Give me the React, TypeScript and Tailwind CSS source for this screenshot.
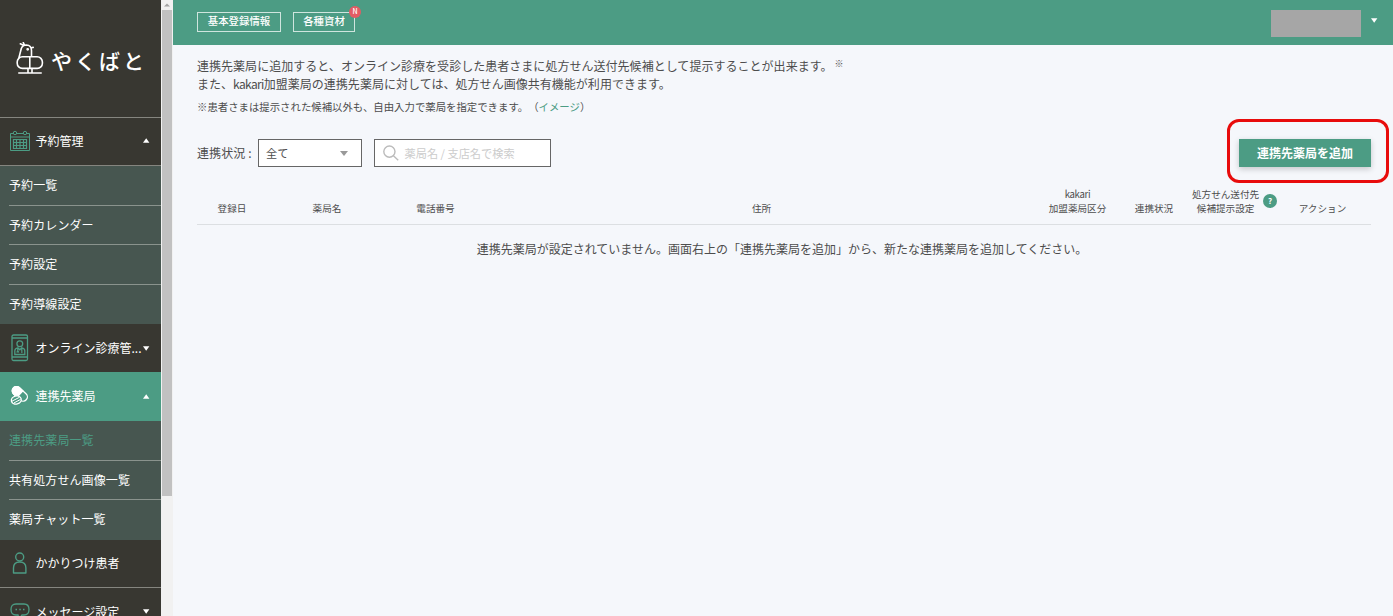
import React from "react";
import clsx from "clsx";

const CalendarIcon = () => (
  <svg width="20" height="22" viewBox="0 0 20 22" fill="none" stroke="#4c9c84">
    <path d="M3 3.5H.5v17h19v-17H17M7 3.5h6M.5 7h19" />
    <circle cx="5" cy="3" r="1.7" />
    <circle cx="15" cy="3" r="1.7" />
    <path d="M3.5 9.5h13v9h-13zM3.5 12.5h13M3.5 15.5h13M6.5 9.5v9M10 9.5v9M13.5 9.5v9" strokeWidth="1.2" />
  </svg>
);

const OnlineIcon = () => (
  <svg width="20" height="28" viewBox="0 0 20 28" fill="none" stroke="#4c9c84" strokeWidth="1.3">
    <rect x="2" y="1" width="15.5" height="25.5" rx="1.5" />
    <path d="M2 4h15.5M2 23h15.5" />
    <circle cx="9.8" cy="9.7" r="2.9" />
    <path d="M4.8 20.5v-3.7q0-2.5 3-3l2 2 2-2q3 .5 3 3v3.7zM7.8 14v3M11.8 14v3M6.8 18.5q1-2 2 0M11 18h1.6" />
  </svg>
);

const PillIcon = () => (
  <svg width="20" height="20" viewBox="0 0 20 20" fill="none" stroke="#fff" strokeWidth="1.3">
    <g transform="rotate(43 10 8)">
      <rect x="1" y="3.7" width="17.5" height="8.6" rx="4.3" />
      <path d="M10 3.7H5.3a4.3 4.3 0 0 0 0 8.6H10z" fill="#fff" />
    </g>
    <ellipse cx="6.3" cy="14" rx="5" ry="4.1" fill="#4c9c84" transform="rotate(-15 6.3 14)" />
    <path d="M2 15.2l7.6-4M3.8 17l6.8-3.6" strokeWidth="1" />
  </svg>
);

const PersonIcon = () => (
  <svg width="18" height="22" viewBox="0 0 18 22" fill="none" stroke="#4c9c84" strokeWidth="1.4">
    <circle cx="9.7" cy="5" r="4" />
    <path d="M3.5 21v-5q0-6 6.2-6t6.2 6v5z" strokeLinejoin="round" />
  </svg>
);

const MessageIcon = () => (
  <svg width="20" height="18" viewBox="0 0 20 18" fill="none" stroke="#4c9c84" strokeWidth="1.3">
    <path d="M6 1h8q5 0 5 5.5t-5 5.5h-2l-3 4-1-4H6Q1 12 1 6.5T6 1z" />
    <path d="M5.5 6.5H7M9.3 6.5h1.5M13 6.5h1.5" />
  </svg>
);

const BirdLogo = () => (
  <svg width="28" height="34" viewBox="0 0 28 34" fill="none" stroke="#fff" strokeWidth="1.6" strokeLinecap="round" strokeLinejoin="round">
    <path d="M3 15.5L5.3 6.5Q6.6 3 10.3 3q5.2.2 5.2 5.5v5.5" />
    <path d="M7.3 3.3L4.3 1.8M8.5 3L7.3.6M15.4 5.8l1.8-.4" />
    <circle cx="11.7" cy="7.3" r=".6" fill="#fff" />
    <rect x="1.2" y="14.8" width="25.2" height="11.6" rx="5.2" />
    <path d="M13.8 15v11.2M12 26.5v4M16 26.5v4M2.8 31h22.4" />
  </svg>
);

const SearchIcon = () => (
  <svg width="16" height="16" viewBox="0 0 16 16" fill="none" stroke="#bbb" strokeWidth="1.4">
    <circle cx="6.4" cy="6.6" r="5.6" />
    <path d="M10.4 10.8l4.8 4.4" />
  </svg>
);

const Triangle = ({ up }: { up?: boolean }) => (
  <svg width="7" height="5" viewBox="0 0 7 5" fill="#fff">
    <path d={up ? "M0 4.7h6.4L3.2.3z" : "M0 .3h6.4L3.2 4.7z"} />
  </svg>
);

interface MenuItemProps {
  icon: React.ReactNode;
  label: string;
  arrow?: "up" | "down";
  className: string;
}

const MenuItem = ({ icon, label, arrow, className }: MenuItemProps) => (
  <div className={clsx("flex shrink-0 items-center pl-2.5 pr-[11px]", className)}>
    <span className="flex w-[25.5px] shrink-0 items-center">{icon}</span>
    <span className="w-0 grow whitespace-nowrap">{label}</span>
    {arrow && <Triangle up={arrow === "up"} />}
  </div>
);

interface SubMenuProps {
  items: string[];
  active?: string;
}

const SubMenu = ({ items, active }: SubMenuProps) => (
  <ul className="shrink-0 bg-[#475650] pl-[9px]">
    {items.map((item) => (
      <li
        key={item}
        className={clsx(
          "flex h-[39.6px] items-center border-b border-[#8a938d] tracking-[0.1px] last:border-transparent",
          item === active && "text-[#4c9c84]",
        )}
      >
        {item}
      </li>
    ))}
  </ul>
);

const Sidebar = () => (
  <aside className="flex w-[161px] shrink-0 flex-col overflow-hidden bg-[#383731] text-xs text-white">
    <div className="flex h-[118px] shrink-0 items-center border-b border-[#85857f] pl-4">
      <BirdLogo />
      <span className="ml-[7px] pt-0.5 text-[21px] font-medium tracking-[3px] whitespace-nowrap">やくばと</span>
    </div>
    <MenuItem icon={<CalendarIcon />} label="予約管理" arrow="up" className="h-12 border-b border-[#85857f] pb-0.5" />
    <SubMenu items={["予約一覧", "予約カレンダー", "予約設定", "予約導線設定"]} />
    <MenuItem icon={<OnlineIcon />} label="オンライン診療管..." arrow="down" className="h-[47.6px]" />
    <MenuItem icon={<PillIcon />} label="連携先薬局" arrow="up" className="h-[49px] bg-[#4c9c84]" />
    <SubMenu items={["連携先薬局一覧", "共有処方せん画像一覧", "薬局チャット一覧"]} active="連携先薬局一覧" />
    <MenuItem icon={<PersonIcon />} label="かかりつけ患者" className="h-12 border-b border-[#85857f]" />
    <MenuItem icon={<MessageIcon />} label="メッセージ設定" arrow="down" className="h-12" />
  </aside>
);

const ScrollBar = () => (
  <div className="flex w-3 shrink-0 flex-col items-center bg-[#f1f1f1]">
    <div className="flex h-2.5 items-center">
      <svg width="6" height="4" viewBox="0 0 6 4" fill="#a3a3a3">
        <path d="M0 3.5h6L3 .5z" />
      </svg>
    </div>
    <div className="h-[486px] w-2.5 bg-[#c1c1c1]" />
  </div>
);

const Header = () => (
  <header className="flex h-[45px] shrink-0 items-center justify-between bg-[#4c9c84] pr-[15px] pl-6 text-[10.4px] text-white">
    <div className="flex gap-3 pb-0.5">
      <div className="flex h-5 w-[84px] items-center justify-center border border-[#cfe5de] pb-0.5 font-medium">基本登録情報</div>
      <div className="relative flex h-5 w-[62px] items-center justify-center border border-[#cfe5de] pb-0.5 font-medium">
        各種資材
        <span className="absolute -top-[7px] -right-[7px] flex size-3 items-center justify-center rounded-full bg-[#e25c64] text-[7px]">
          N
        </span>
      </div>
    </div>
    <div className="flex items-center gap-2.5 pt-px">
      <div className="h-[27px] w-[90px] bg-[#a6a6a6]" />
      <div className="pb-[5px]">
        <Triangle />
      </div>
    </div>
  </header>
);

const App = () => {
  return (
    <div className="flex h-[616px] w-[1393px] overflow-hidden bg-[#f5f7fb] font-['Noto_Sans_CJK_JP',sans-serif] text-xs text-[#4d4d4d]">
      <Sidebar />
      <ScrollBar />
      <main className="flex grow flex-col">
        <Header />
        <div className="flex flex-col pt-3 pr-[22px] pl-6">
          <p className="leading-[18px] tracking-[0.03px] whitespace-nowrap">
            連携先薬局に追加すると、オンライン診療を受診した患者さまに処方せん送付先候補として提示することが出来ます。
            <span className="relative -top-1 ml-0.5 text-[9px] leading-none">※</span>
            <br />
            また、<span className="tracking-[-0.65px]">kakari</span>
            加盟薬局の連携先薬局に対しては、処方せん画像共有機能が利用できます。
          </p>
          <p className="mt-[5px] text-[10.4px] leading-[18px] [text-spacing-trim:space-all]">
            ※患者さまは提示された候補以外も、自由入力で薬局を指定できます。（
            <a className="text-[#4c9c84]">イメージ</a>）
          </p>

          <div className="mt-[3px] -mr-[18px] flex h-16 items-center">
            <span className="w-[61px] pt-1 tracking-[0.1px] whitespace-nowrap">連携状況 :</span>
            <div className="mt-1 flex h-7 w-[104px] items-center justify-between border border-[#666] bg-white pr-[13px] pl-[7px] text-[11.2px]">
              全て
              <svg width="8" height="5" viewBox="0 0 8 5" fill="#999">
                <path d="M0 0h8L4 5z" />
              </svg>
            </div>
            <div className="mt-1 ml-[11.5px] flex h-7 w-[177px] items-center gap-[6px] border border-[#666] bg-white pl-2 text-[11.2px] text-[#ccc]">
              <SearchIcon />
              薬局名 / 支店名で検索
            </div>
            <div className="ml-auto flex h-16 w-[162px] items-center justify-center rounded-xl border-3 border-[#e80c0c] pt-1 pr-1.5">
              <button className="h-7 w-[132px] bg-[#4c9c84] font-bold text-white shadow-[0_2px_6px_rgba(0,0,0,0.2)]">
                連携先薬局を追加
              </button>
            </div>
          </div>

          <div className="flex h-[42px] items-end border-b border-[#dcdfe2] pb-[9px] text-center text-[9.6px] leading-[14px] whitespace-nowrap">
            <div className="w-[70px]">登録日</div>
            <div className="w-[120px]">薬局名</div>
            <div className="w-[97px]">電話番号</div>
            <div className="w-[555px]">住所</div>
            <div className="w-[77px]">
              <span className="tracking-[-0.3px]">kakari</span>
              <br />
              加盟薬局区分
            </div>
            <div className="w-[76px]">連携状況</div>
            <div className="flex w-[85px] items-center">
              <div className="w-[68px]">
                処方せん送付先
                <br />
                候補提示設定
              </div>
              <span className="ml-1 flex size-3.5 shrink-0 items-center justify-center rounded-full bg-[#4c9c84] text-[8px] font-bold text-white">
                ?
              </span>
            </div>
            <div className="w-[91px]">アクション</div>
          </div>

          <p className="mt-[15px] pr-1 text-center leading-[18px]">
            連携先薬局が設定されていません。画面右上の「連携先薬局を追加」から、新たな連携薬局を追加してください。
          </p>
        </div>
      </main>
    </div>
  );
};

export default App;
